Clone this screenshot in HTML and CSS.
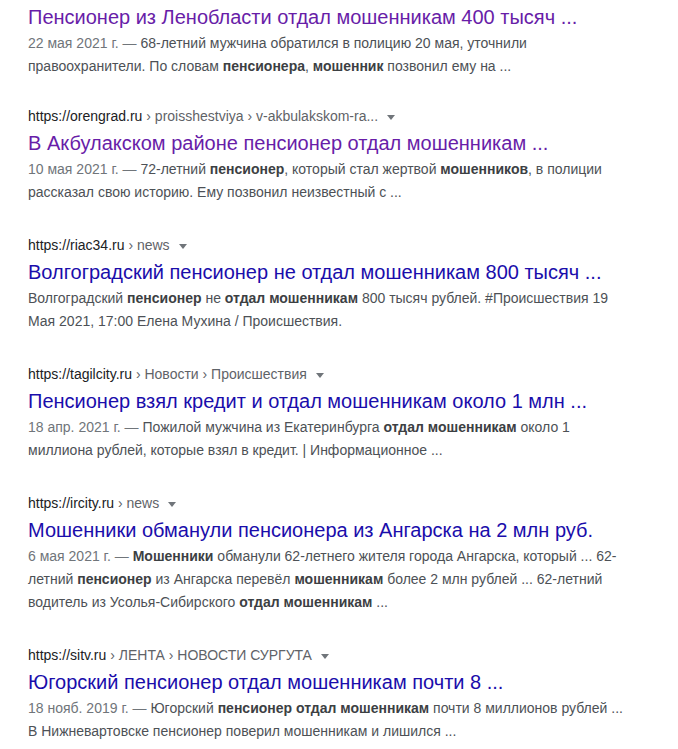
FILE: index.html
```html
<!DOCTYPE html>
<html lang="ru">
<head>
    <meta charset="UTF-8">
    <title>Результаты поиска</title>
    <link rel="stylesheet" href="styles.css">
</head>
<body>
    <div class="results">
        <!-- first result, its url line is scrolled off -->
        <div class="result first">
            <a class="title visited" href="#">Пенсионер из Ленобласти отдал мошенникам 400 тысяч ...</a>
            <div class="snippet"><span class="date">22 мая 2021 г. — </span>68-летний мужчина обратился в полицию 20 мая, уточнили правоохранители. По словам <b>пенсионера</b>, <b>мошенник</b> позвонил ему на ...</div>
        </div>

        <div class="result">
            <div class="cite">https://orengrad.ru<span class="crumbs"> › proisshestviya › v-akbulakskom-ra...</span><span class="arrow"></span></div>
            <a class="title visited" href="#">В Акбулакском районе пенсионер отдал мошенникам ...</a>
            <div class="snippet"><span class="date">10 мая 2021 г. — </span>72-летний <b>пенсионер</b>, который стал жертвой <b>мошенников</b>, в полиции рассказал свою историю. Ему позвонил неизвестный с ...</div>
        </div>

        <div class="result">
            <div class="cite">https://riac34.ru<span class="crumbs"> › news</span><span class="arrow"></span></div>
            <a class="title" href="#">Волгоградский пенсионер не отдал мошенникам 800 тысяч ...</a>
            <div class="snippet">Волгоградский <b>пенсионер</b> не <b>отдал мошенникам</b> 800 тысяч рублей. #Происшествия 19 Мая 2021, 17:00 Елена Мухина / Происшествия.</div>
        </div>

        <div class="result">
            <div class="cite">https://tagilcity.ru<span class="crumbs"> › Новости › Происшествия</span><span class="arrow"></span></div>
            <a class="title" href="#">Пенсионер взял кредит и отдал мошенникам около 1 млн ...</a>
            <div class="snippet"><span class="date">18 апр. 2021 г. — </span>Пожилой мужчина из Екатеринбурга <b>отдал мошенникам</b> около 1 миллиона рублей, которые взял в кредит. | Информационное ...</div>
        </div>

        <div class="result">
            <div class="cite">https://ircity.ru<span class="crumbs"> › news</span><span class="arrow"></span></div>
            <a class="title" href="#">Мошенники обманули пенсионера из Ангарска на 2 млн руб.</a>
            <div class="snippet"><span class="date">6 мая 2021 г. — </span><b>Мошенники</b> обманули 62-летнего жителя города Ангарска, который ... 62-летний <b>пенсионер</b> из Ангарска перевёл <b>мошенникам</b> более 2 млн рублей ... 62-летний водитель из Усолья-Сибирского <b>отдал мошенникам</b> ...</div>
        </div>

        <div class="result">
            <div class="cite">https://sitv.ru<span class="crumbs"> › ЛЕНТА › НОВОСТИ СУРГУТА</span><span class="arrow"></span></div>
            <a class="title" href="#">Югорский пенсионер отдал мошенникам почти 8 ...</a>
            <div class="snippet"><span class="date">18 нояб. 2019 г. — </span>Югорский <b>пенсионер отдал мошенникам</b> почти 8 миллионов рублей ... В Нижневартовске пенсионер поверил мошенникам и лишился ...</div>
        </div>
    </div>
</body>
</html>
```

FILE: styles.css
```css
body {
    margin: 0;
    padding: 0;
    background-color: #fff;
    font-family: "Liberation Sans", Arial, sans-serif;
    color: #4d5156;
}

.results {
    padding: 2px 0 0 28px;
    width: 600px;
}

.result {
    margin-bottom: 29px;
}

.result.first {
    margin-bottom: 26px;
}

/* url line */
.cite {
    font-size: 14px;
    line-height: 24px;
    color: #202124;
    white-space: nowrap;
}

.cite .crumbs {
    color: #5f6368;
}

.arrow {
    display: inline-block;
    margin-left: 9px;
    vertical-align: middle;
    border-left: 4px solid transparent;
    border-right: 4px solid transparent;
    border-top: 5px solid #70757a;
}

.title {
    display: block;
    font-size: 20px;
    line-height: 30px;
    color: #1a0dab;
    text-decoration: none;
    white-space: nowrap;
}

.title.visited {
    color: #681da8;
}

.snippet {
    font-size: 14px;
    line-height: 23px;
    color: #4d5156;
}

.snippet b {
    color: #3c4043;
}

.date {
    color: #70757a;
}
```
